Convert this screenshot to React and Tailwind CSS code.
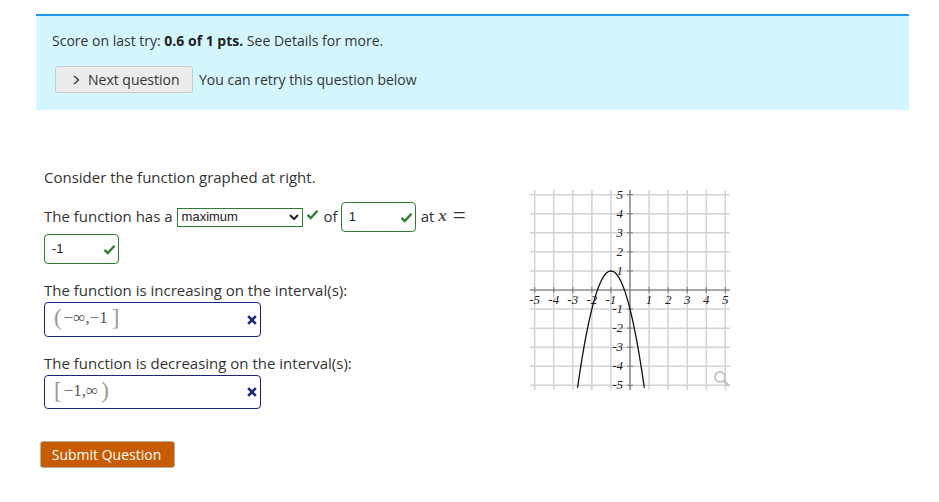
const U = 19.07;
const OX = 100;
const OY = 100;

function Graph() {
  const ticks = [-5, -4, -3, -2, -1, 0, 1, 2, 3, 4, 5];
  const pts = [];
  for (let x = -2.75; x <= 0.75; x += 0.05) {
    const y = -2 * (x + 1) * (x + 1) + 1;
    pts.push(`${(OX + x * U).toFixed(2)},${(OY - y * U).toFixed(2)}`);
  }
  const serif = { fontFamily: '"Liberation Serif", serif', fontStyle: 'italic', fontSize: 13, fill: '#222' };
  return (
    <svg width="200" height="202" viewBox="0 0 200 202" className="block shrink-0 overflow-visible">
      {ticks.filter((t) => t !== 0).map((t) => (
        <g key={t}>
          <line x1={OX + t * U} x2={OX + t * U} y1="0" y2="200" stroke="#d2d2d2" strokeWidth="1.5" />
          <line y1={OY - t * U} y2={OY - t * U} x1="0" x2="200" stroke="#d2d2d2" strokeWidth="1.5" />
        </g>
      ))}
      <line x1="0" x2="200" y1={OY} y2={OY} stroke="#8a8a8a" strokeWidth="1.6" />
      <line y1="0" y2="200" x1={OX} x2={OX} stroke="#8a8a8a" strokeWidth="1.6" />
      {ticks.filter((t) => t !== 0).map((t) => (
        <g key={t}>
          <line x1={OX + t * U} x2={OX + t * U} y1={OY - 3} y2={OY + 3} stroke="#777" strokeWidth="1" />
          <line y1={OY - t * U} y2={OY - t * U} x1={OX - 3} x2={OX + 3} stroke="#777" strokeWidth="1" />
          <text x={OX + t * U} y={OY + 14} textAnchor="middle" style={serif}>{t}</text>
          <text x={OX - 7} y={OY - t * U + 4} textAnchor="end" style={serif}>{t}</text>
        </g>
      ))}
      <polyline points={pts.join(' ')} fill="none" stroke="#111" strokeWidth="1.3" />
      <circle cx="190" cy="187" r="5" fill="none" stroke="#c4c4c4" strokeWidth="2" />
      <line x1="194" y1="191" x2="199" y2="196" stroke="#c4c4c4" strokeWidth="2.5" />
    </svg>
  );
}

function Check({ className }) {
  return (
    <svg width="13" height="11" viewBox="0 0 13 11" className={className}>
      <path d="M1.5 5.8 L4.8 9 L11.5 1.8" fill="none" stroke="#2e7d32" strokeWidth="2.4" />
    </svg>
  );
}

function Cross() {
  return (
    <svg width="10" height="10" viewBox="0 0 10 10" className="shrink-0">
      <path d="M1.2 1.2 L8.8 8.8 M8.8 1.2 L1.2 8.8" fill="none" stroke="#1f2380" strokeWidth="2.6" />
    </svg>
  );
}

function NumBox({ value, className }) {
  return (
    <span className={`flex items-center justify-between w-[75px] h-[30px] border border-[#2e7d32] rounded-[4px] pl-[7px] pr-[2px] bg-white text-[13px] text-[#222] font-['Liberation_Sans',sans-serif] ${className || ''}`}>
      {value}
      <Check />
    </span>
  );
}

function Bracket({ children, className }) {
  return <span className={`font-light text-[23px] leading-[20px] text-[#999] ${className || ''}`}>{children}</span>;
}

function MathBox({ children, className }) {
  return (
    <div className={`flex items-center justify-between w-[217px] border border-[#1f2380] rounded-[4px] pl-[9px] pr-[3px] bg-white ${className}`}>
      <span className="flex items-center mb-[3px] font-['Liberation_Serif',serif] text-[17px] leading-[20px] text-[#555] whitespace-nowrap">{children}</span>
      <Cross />
    </div>
  );
}

export default function App() {
  return (
    <div className="w-[939px] h-[502px] bg-white pt-[14px] pl-[36px] text-[14px] leading-[20px] text-[#333] font-['Open_Sans',sans-serif] overflow-hidden">
      <div className="w-[873px] h-[96px] bg-[#d4f6ff] border-t-2 border-[#2196f3] pt-[15px] pl-[16px]">
        <p>Score on last try: <b className="text-[#222]">0.6 of 1 pts.</b> See Details for more.</p>
        <div className="flex items-center mt-[15px] ml-[3px]">
          <button className="flex items-center w-[138px] h-[27px] bg-[#ececec] border border-[#c9c9c9] rounded-[3px] pl-[17px] gap-[8px] text-[#333]">
            <svg width="7" height="10" viewBox="0 0 7 10"><path d="M1 1 L5.5 5 L1 9" fill="none" stroke="#333" strokeWidth="1.3" /></svg>
            Next question
          </button>
          <span className="ml-[6px]">You can retry this question below</span>
        </div>
      </div>

      <div className="flex">
        <div className="w-[494px] shrink-0 pl-[8px] text-[15px]">
          <p className="mt-[57px]">Consider the function graphed at right.</p>
          <div className="flex items-center mt-[15px] h-[30px] whitespace-nowrap">
            <span className="mb-[2px]">The function has a</span>
            <span className="flex items-center justify-between ml-[4px] w-[126px] h-[19px] border border-[#2e7d32] bg-white pl-[4px] pr-[3px] text-[13px] text-[#222] font-['Liberation_Sans',sans-serif]">
              maximum
              <svg width="10" height="7" viewBox="0 0 10 7"><path d="M1 1 L5 5 L9 1" fill="none" stroke="#222" strokeWidth="2" /></svg>
            </span>
            <Check className="ml-[3px] -mt-[6px]" />
            <span className="ml-[5px] mb-[2px]">of</span>
            <NumBox value="1" className="ml-[3px]" />
            <span className="ml-[5px] mb-[2px]">at</span>
            <span className="ml-[4px] mb-[2px] font-['Liberation_Serif',serif] italic font-bold text-[17px] text-[#555]">x</span>
            <span className="ml-[6px] mb-[2px] font-['Liberation_Serif',serif] text-[23px] leading-[20px]">=</span>
          </div>
          <NumBox value="-1" className="mt-[2px]" />
          <p className="mt-[16px]">The function is increasing on the interval(s):</p>
          <MathBox className="h-[35px] mt-[2px]"><Bracket>(</Bracket><span className="ml-[2px]">−∞,−1</span><Bracket className="ml-[4px]">]</Bracket></MathBox>
          <p className="mt-[16px]">The function is decreasing on the interval(s):</p>
          <MathBox className="h-[34px] mt-[2px]"><Bracket>[</Bracket><span className="ml-[2px]">−1,∞</span><Bracket className="ml-[3px]">)</Bracket></MathBox>
          <button className="block -ml-[4px] mt-[32px] w-[135px] h-[27px] bg-[#c75b00] border border-[#b9b0a5] rounded-[3px] text-[#fff] text-[14px] text-center pr-[2px]">Submit Question</button>
        </div>
        <div className="mt-[80px]">
          <Graph />
        </div>
      </div>
    </div>
  );
}
